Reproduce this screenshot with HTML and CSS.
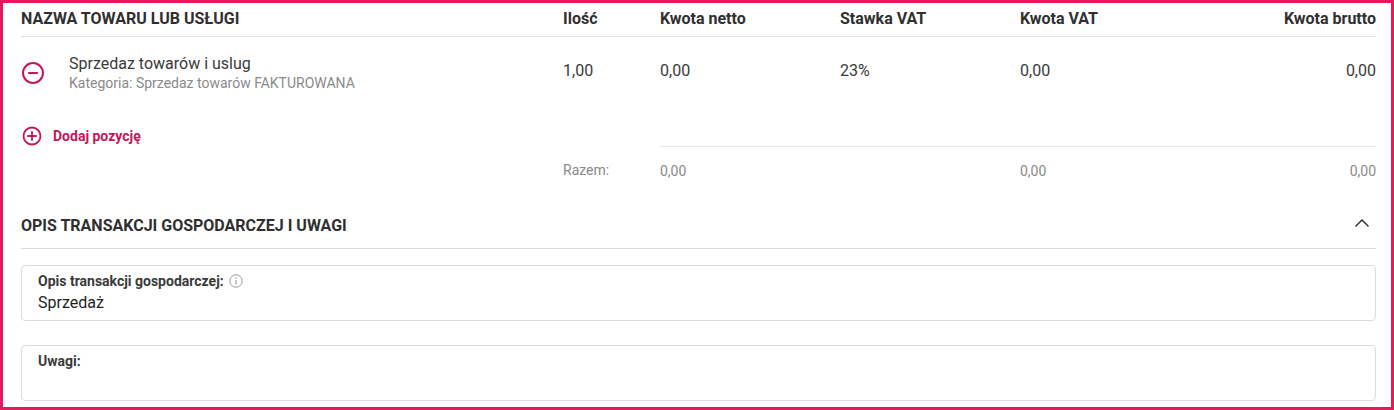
FILE: index.html
```html
<!DOCTYPE html>
<html lang="pl">
<head>
<meta charset="utf-8">
<title>Pozycje</title>
<link rel="stylesheet" href="styles.css">
</head>
<body>
<div class="panel">
  <div class="grid head">
    <div>NAZWA TOWARU LUB USŁUGI</div>
    <div>Ilość</div>
    <div>Kwota netto</div>
    <div>Stawka VAT</div>
    <div>Kwota VAT</div>
    <div class="right">Kwota brutto</div>
  </div>

  <div class="grid item">
    <div class="name-cell">
      <svg class="ico-minus" width="24" height="24" viewBox="0 0 24 24"><circle cx="12" cy="12" r="10" fill="none" stroke="#c2185b" stroke-width="2"/><line x1="8" y1="12" x2="16" y2="12" stroke="#c2185b" stroke-width="2.2" stroke-linecap="round"/></svg>
      <div class="name-text">
        <div class="name">Sprzedaz towarów i uslug</div>
        <div class="cat">Kategoria: Sprzedaz towarów FAKTUROWANA</div>
      </div>
    </div>
    <div class="val">1,00</div>
    <div class="val">0,00</div>
    <div class="val">23%</div>
    <div class="val">0,00</div>
    <div class="val right">0,00</div>
  </div>

  <div class="add">
    <svg width="20" height="20" viewBox="0 0 20 20"><circle cx="10" cy="10" r="8.5" fill="none" stroke="#c2185b" stroke-width="1.8"/><line x1="6" y1="10" x2="14" y2="10" stroke="#c2185b" stroke-width="1.8" stroke-linecap="round"/><line x1="10" y1="6" x2="10" y2="14" stroke="#c2185b" stroke-width="1.8" stroke-linecap="round"/></svg>
    <span>Dodaj pozycję</span>
  </div>

  <div class="grid total">
    <div></div>
    <div>Razem:</div>
    <div class="line">0,00</div>
    <div class="line"></div>
    <div class="line">0,00</div>
    <div class="line right">0,00</div>
  </div>

  <div class="sec-head">
    <span>OPIS TRANSAKCJI GOSPODARCZEJ I UWAGI</span>
    <svg width="16" height="10" viewBox="0 0 16 10"><polyline points="1.5,8.5 8,2 14.5,8.5" fill="none" stroke="#222" stroke-width="1.3"/></svg>
  </div>

  <div class="field">
    <div class="label">Opis transakcji gospodarczej:
      <svg class="info" width="14" height="14" viewBox="0 0 14 14"><circle cx="7" cy="7" r="6.2" fill="none" stroke="#9a9a9a" stroke-width="1"/><line x1="7" y1="6" x2="7" y2="10.5" stroke="#9a9a9a" stroke-width="1.1"/><circle cx="7" cy="4" r="0.75" fill="#9a9a9a"/></svg>
    </div>
    <div class="input">Sprzedaż</div>
  </div>

  <div class="field second">
    <div class="label">Uwagi:</div>
    <div class="input"></div>
  </div>
</div>
</body>
</html>
```

FILE: styles.css
```css
* { box-sizing: border-box; }
html, body { margin: 0; padding: 0; background: #fff; }
body { font-family: Roboto, "Liberation Sans", Arial, sans-serif; color: #333; }

.panel {
  width: 1394px;
  height: 410px;
  border: 3px solid #e2195a;
  padding: 0 15px 0 18px;
  overflow: hidden;
}

.grid {
  display: grid;
  grid-template-columns: 542px 97px 180px 180px 178px 1fr;
}
.right { text-align: right; }

.head {
  font-size: 16px;
  font-weight: 700;
  color: #2f2f2f;
  line-height: 19px;
  padding: 6px 0 8px;
  border-bottom: 1px solid #e0e0e0;
}

.item { padding-top: 17px; }
.name-cell { display: flex; align-items: center; }
.ico-minus { margin-left: 0; }
.name-text { margin-left: 24px; }
.name { font-size: 16px; line-height: 20px; color: #3a3a3a; }
.cat { font-size: 14px; line-height: 18px; color: #8a8a8a; }
.val { font-size: 16px; line-height: 20px; color: #3a3a3a; padding-top: 7px; }

.add {
  display: flex;
  align-items: center;
  gap: 11px;
  margin-top: 34px;
  margin-left: 1px;
  height: 20px;
  color: #c2185b;
  font-size: 14px;
  font-weight: 700;
}

.total { font-size: 14px; color: #8a8a8a; }
.total > div { padding-top: 15px; height: 56px; line-height: 18px; }
.total .line { border-top: 1px solid #e6e6e6; }

.sec-head {
  display: flex;
  justify-content: space-between;
  align-items: center;
  height: 47px;
  border-bottom: 1px solid #dcdcdc;
  font-size: 16px;
  font-weight: 700;
  color: #2f2f2f;
}
.sec-head svg { margin-right: 6px; margin-top: -4px; }

.field {
  margin-top: 16px;
  height: 56px;
  border: 1px solid #dcdcdc;
  border-radius: 4px;
  padding: 6px 16px 0;
}
.field.second { margin-top: 24px; }
.label {
  display: flex;
  align-items: center;
  gap: 4px;
  font-size: 14px;
  font-weight: 700;
  color: #3a3a3a;
  line-height: 18px;
}
.info { margin-left: 1px; }
.input { font-size: 16px; color: #1e1e1e; line-height: 22px; margin-top: 2px; }
```
